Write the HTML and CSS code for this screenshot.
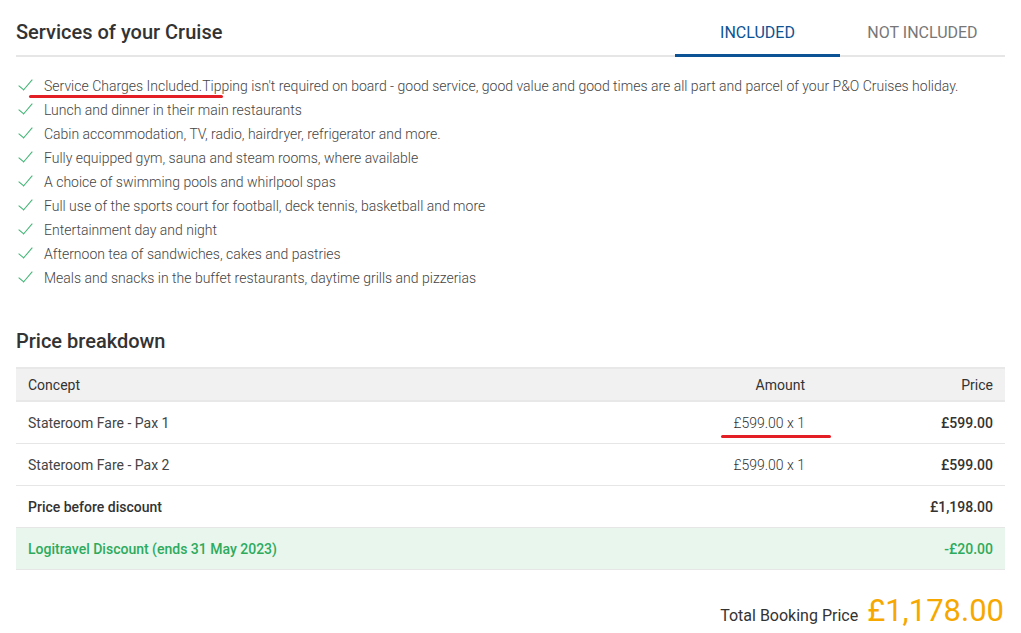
FILE: index.html
```html
<!DOCTYPE html>
<html>
<head>
	<title>Services of your Cruise</title>
	<link rel="stylesheet" href="styles.css">
</head>
<body>
	<div class="page">
		<div class="services-head">
			<h2 class="title">Services of your Cruise</h2>
			<div class="tabs">
				<div class="tab active">INCLUDED</div>
				<div class="tab">NOT INCLUDED</div>
			</div>
		</div>

		<ul class="services">
			<li><span class="check"></span><span class="mark">Service Charges Included.</span>Tipping isn't required on board - good service, good value and good times are all part and parcel of your P&amp;O Cruises holiday.</li>
			<li><span class="check"></span>Lunch and dinner in their main restaurants</li>
			<li><span class="check"></span>Cabin accommodation, TV, radio, hairdryer, refrigerator and more.</li>
			<li><span class="check"></span>Fully equipped gym, sauna and steam rooms, where available</li>
			<li><span class="check"></span>A choice of swimming pools and whirlpool spas</li>
			<li><span class="check"></span>Full use of the sports court for football, deck tennis, basketball and more</li>
			<li><span class="check"></span>Entertainment day and night</li>
			<li><span class="check"></span>Afternoon tea of sandwiches, cakes and pastries</li>
			<li><span class="check"></span>Meals and snacks in the buffet restaurants, daytime grills and pizzerias</li>
		</ul>

		<h2 class="title breakdown-title">Price breakdown</h2>
		<table class="breakdown">
			<colgroup>
				<col>
				<col class="col-amount">
				<col class="col-price">
			</colgroup>
			<thead>
				<tr>
					<th>Concept</th>
					<th class="amount">Amount</th>
					<th class="price">Price</th>
				</tr>
			</thead>
			<tbody>
				<tr>
					<td>Stateroom Fare - Pax 1</td>
					<td class="amount"><span class="mark mark-amount">£599.00 x 1</span></td>
					<td class="price bold">£599.00</td>
				</tr>
				<tr>
					<td>Stateroom Fare - Pax 2</td>
					<td class="amount">£599.00 x 1</td>
					<td class="price bold">£599.00</td>
				</tr>
				<tr>
					<td class="bold">Price before discount</td>
					<td></td>
					<td class="price bold">£1,198.00</td>
				</tr>
				<tr class="discount">
					<td>Logitravel Discount (ends 31 May 2023)</td>
					<td></td>
					<td class="price">-£20.00</td>
				</tr>
			</tbody>
		</table>

		<div class="total">
			<span class="total-label">Total Booking Price</span>
			<span class="total-value">£1,178.00</span>
		</div>
	</div>
</body>
</html>
```

FILE: styles.css
```css
body {
	margin: 0;
	font-family: Roboto, "Liberation Sans", sans-serif;
	color: #333;
	background: #fff;
}

.page {
	padding: 0 16px;
}

.services-head {
	display: flex;
	justify-content: space-between;
	align-items: flex-end;
	border-bottom: 2px solid #e6e6e6;
	height: 57px;
	box-sizing: border-box;
}

.title {
	margin: 0;
	font-size: 20px;
	font-weight: 500;
	color: #333;
}

.services-head .title {
	align-self: flex-start;
	margin-top: 20px;
}

.tabs {
	display: flex;
	margin-bottom: -2px;
}

.tab {
	width: 165px;
	text-align: center;
	font-size: 16px;
	color: #777;
	padding-bottom: 12px;
	border-bottom: 3px solid transparent;
}

.tab.active {
	color: #0b5394;
	border-bottom-color: #0b5394;
}

.services {
	list-style: none;
	margin: 0;
	padding: 17px 0 0;
}

.services li {
	position: relative;
	padding-left: 28px;
	font-size: 14px;
	font-weight: 300;
	color: #444;
	line-height: 24px;
}

.check {
	position: absolute;
	left: 1px;
	top: 3px;
	width: 6px;
	height: 13px;
	border: solid #3cb371;
	border-width: 0 1.5px 1.5px 0;
	transform: translate(5px, -1px) rotate(40deg);
	transform-origin: center;
}

.mark {
	position: relative;
}

.mark::after {
	content: "";
	position: absolute;
	left: -15px;
	right: -21px;
	bottom: -4px;
	height: 3px;
	border-radius: 2px;
	background: #e31e24;
}

.breakdown-title {
	margin-top: 39px;
	margin-bottom: 14px;
}

.breakdown {
	width: 100%;
	border-collapse: collapse;
	table-layout: fixed;
	font-size: 14px;
}

.col-amount {
	width: 250px;
}

.col-price {
	width: 188px;
}

.breakdown th {
	background: #f1f1f1;
	font-weight: 400;
	color: #333;
	height: 31px;
	padding: 0 12px;
	border-top: 2px solid #e8e8e8;
	border-bottom: 2px solid #e8e8e8;
	text-align: left;
}

.breakdown td {
	height: 41px;
	padding: 0 12px;
	border-bottom: 1px solid #e6e6e6;
	color: #444;
}

.breakdown .amount,
.breakdown .price {
	text-align: right;
}

.breakdown td.amount {
	font-weight: 300;
	color: #333;
}

.bold {
	font-weight: 500;
}

.breakdown td.bold {
	color: #333;
}

.mark-amount::after {
	left: -12px;
	right: -26px;
	bottom: -7px;
}

.discount td {
	background: #e8f6ed;
	color: #2eaa5c;
	font-weight: 500;
}

.total {
	display: flex;
	justify-content: flex-end;
	align-items: baseline;
	margin-top: 22px;
	gap: 9px;
}

.total-label {
	font-size: 16px;
	color: #333;
}

.total-value {
	font-size: 31px;
	font-weight: 400;
	color: #f6a800;
	margin-right: 1px;
}
```
